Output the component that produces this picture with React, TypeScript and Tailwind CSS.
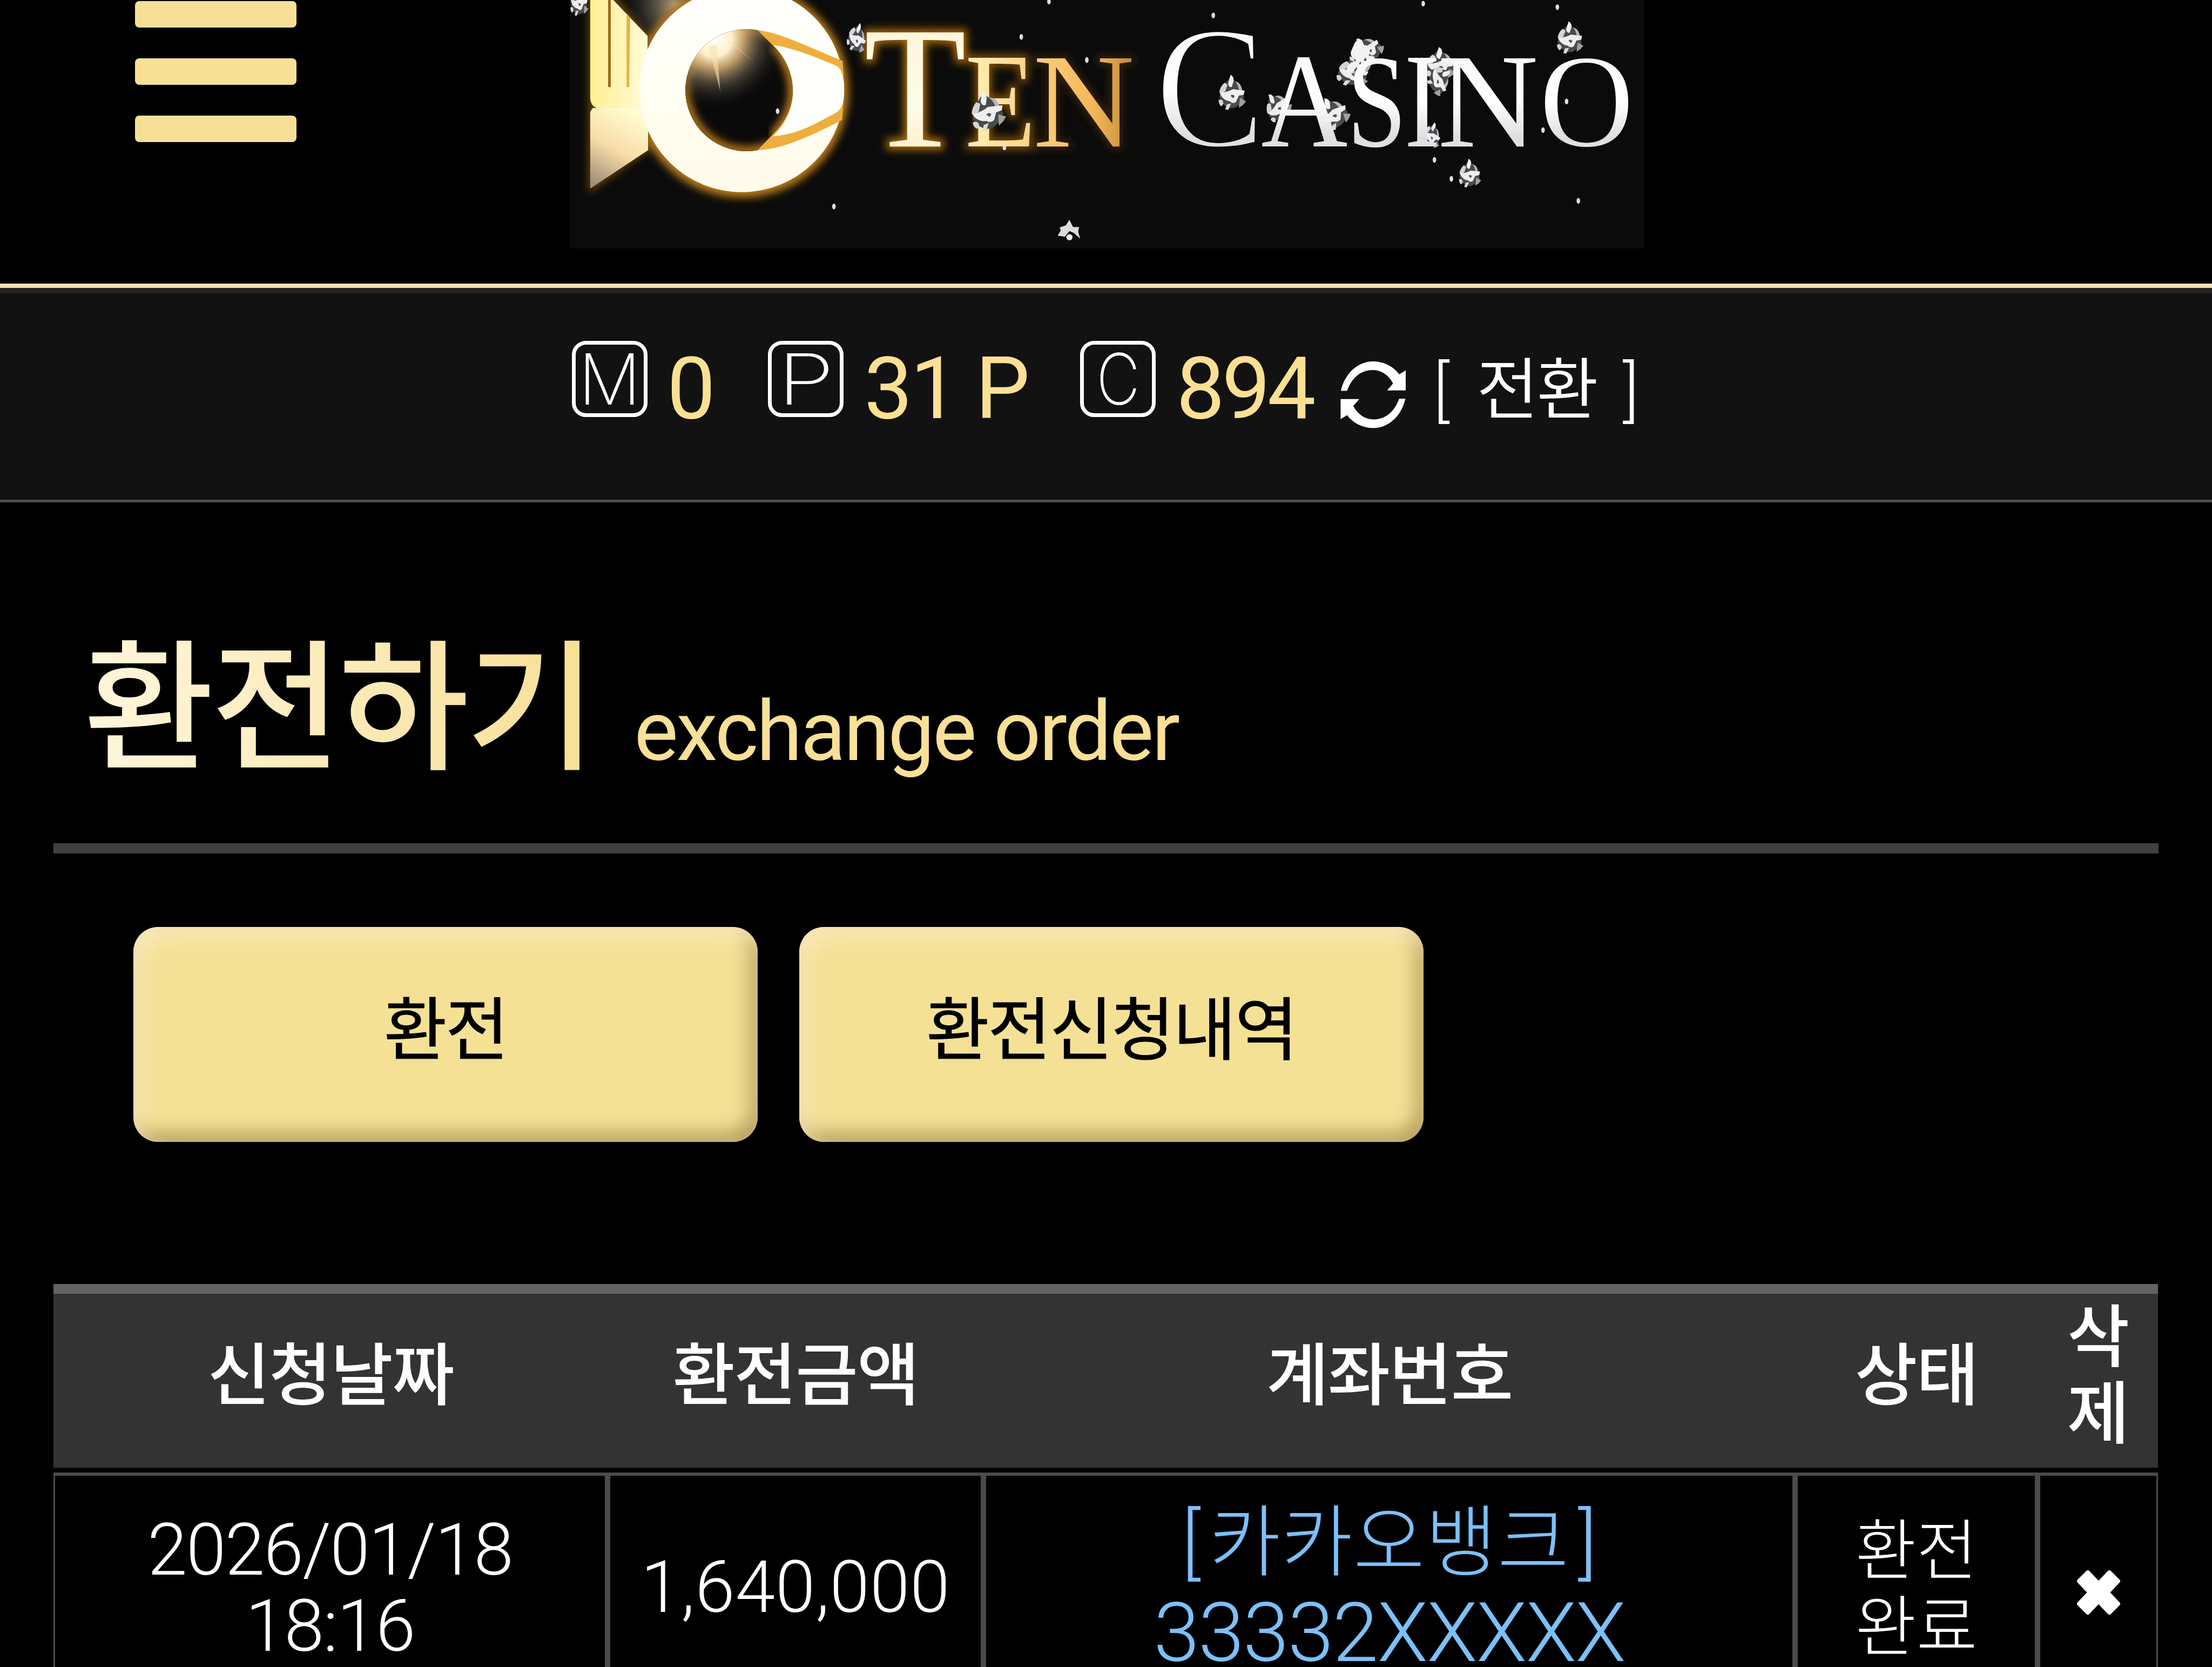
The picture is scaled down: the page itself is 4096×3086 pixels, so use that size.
import type { ReactNode } from 'react'
import { clsx } from 'clsx'

type LetterProps = {
  char: string
  x: number
  width: number
  size: number
  // left and right edge of the glyph, in em
  ink: [number, number]
  fill: string
  stroke?: string
  strokeWidth?: number
}

// One letter of the logo, stretched so that its ink fills the given width
function Letter({ char, x, width, size, ink, ...paint }: LetterProps) {
  const scale = width / ((ink[1] - ink[0]) * size)
  return (
    <text
      transform={`translate(${x - ink[0] * size * scale} 286) scale(${scale} 1)`}
      fontFamily="'Liberation Serif', serif"
      fontSize={size}
      {...paint}
    >
      {char}
    </text>
  )
}

type GemProps = { x: number; y: number; w: number; h: number; turn?: number }

function Gem({ x, y, w, h, turn = 0 }: GemProps) {
  return (
    <g transform={`translate(${x} ${y}) scale(${w / 100} ${h / 100}) rotate(${turn} 50 50)`}>
      <path d="M48 4 L62 18 L78 26 L86 44 L92 66 L80 82 L60 92 L38 94 L18 80 L8 62 L14 38 L30 22 Z" fill="#4a4b4d" />
      <path d="M46 0 Q58 4 56 18 L50 34 Q40 36 38 24 Z" fill="#f1f1f3" />
      <path d="M62 18 Q82 22 86 46 L74 42 Q72 28 62 18 Z" fill="#b4b6b9" />
      <path d="M26 22 L36 28 L28 46 Q14 56 8 48 Q12 32 26 22 Z" fill="#d4d5d7" />
      <path d="M10 50 Q40 48 54 40 L94 44 L90 56 L74 58 L64 76 Q52 82 44 74 L34 72 Q16 66 10 50 Z" fill="#eeeef0" />
      <path d="M46 58 Q54 52 60 60 L54 66 Z" fill="#55575a" />
      <path d="M78 64 L98 74 L88 84 L74 92 Z" fill="#9fa0a2" />
      <path d="M6 70 Q20 66 22 80 L16 88 Q6 84 6 70 Z" fill="#d6d6d8" />
      <path d="M34 82 L48 80 L38 98 L28 96 Z" fill="#dcdcde" />
    </g>
  )
}

const gems: GemProps[] = [
  { x: 1112, y: -26, w: 38, h: 58 },
  { x: 1654, y: 44, w: 40, h: 60, turn: 20 },
  { x: 1892, y: 178, w: 72, h: 78, turn: -12 },
  { x: 2377, y: 146, w: 58, h: 70 },
  { x: 2468, y: 178, w: 54, h: 60, turn: -35 },
  { x: 2570, y: 188, w: 66, h: 66, turn: -25 },
  { x: 2640, y: 68, w: 62, h: 56, turn: -40 },
  { x: 2609, y: 108, w: 68, h: 62, turn: 10 },
  { x: 2636, y: 86, w: 50, h: 66, turn: 80 },
  { x: 2782, y: 92, w: 62, h: 66 },
  { x: 2788, y: 124, w: 48, h: 62, turn: 60 },
  { x: 2778, y: 238, w: 38, h: 52, turn: 20 },
  { x: 2847, y: 310, w: 47, h: 57 },
  { x: 3038, y: 42, w: 56, h: 64 },
]

const sparks = [
  [2370, 30], [2780, 7], [3042, 14], [3060, 198], [3014, 254], [2802, 312], [2835, 349],
  [3083, 392], [1995, 72], [2123, 117], [1519, 217], [1629, 403], [1962, 288], [2049, 3],
]

const goldLetters: LetterProps[] = [
  { char: 'T', x: 1693, width: 189, size: 340, ink: [0.017, 0.593], fill: 'url(#goldT)' },
  { char: 'E', x: 1888, width: 132, size: 263, ink: [0.012, 0.597], fill: 'url(#goldE)' },
  { char: 'N', x: 2021, width: 191, size: 263, ink: [0.012, 0.707], fill: 'url(#goldN)' },
]

const silverLetters: LetterProps[] = [
  { char: 'C', x: 2265, width: 196, size: 342, ink: [0.028, 0.633], fill: 'url(#silver)', stroke: '#0b0b0b', strokeWidth: 6 },
  { char: 'A', x: 2467, width: 162, size: 263, ink: [0.015, 0.706], fill: 'url(#silver)' },
  { char: 'S', x: 2640, width: 94, size: 260, ink: [0.042, 0.491], fill: 'url(#silver)' },
  { char: 'I', x: 2747, width: 62, size: 263, ink: [0.018, 0.315], fill: 'url(#silver)' },
  { char: 'N', x: 2811, width: 190, size: 263, ink: [0.012, 0.707], fill: 'url(#silver)' },
  { char: 'O', x: 3015, width: 168, size: 260, ink: [0.034, 0.688], fill: 'url(#silver)', stroke: '#0b0b0b', strokeWidth: 2 },
]

function Logo() {
  return (
    <svg viewBox="1113 0 2098 485" preserveAspectRatio="none" className="block h-[460px] w-[1989px] bg-[#0b0b0b]">
      <defs>
        <linearGradient id="goldT" x1="0" y1="0" x2="0" y2="1">
          <stop offset="0" stopColor="#fff3d6" />
          <stop offset="0.6" stopColor="#fffbe6" />
          <stop offset="1" stopColor="#ffe9b8" />
        </linearGradient>
        <linearGradient id="goldE" x1="0" y1="0" x2="1" y2="0">
          <stop offset="0" stopColor="#fff2b8" />
          <stop offset="1" stopColor="#fcd084" />
        </linearGradient>
        <linearGradient id="goldN" x1="0" y1="0" x2="1" y2="0">
          <stop offset="0" stopColor="#fdd07c" />
          <stop offset="0.6" stopColor="#f3b75a" />
          <stop offset="1" stopColor="#bd8838" />
        </linearGradient>
        <linearGradient id="silver" x1="0" y1="0" x2="0" y2="1">
          <stop offset="0" stopColor="#f4f4f6" />
          <stop offset="0.5" stopColor="#ffffff" />
          <stop offset="0.75" stopColor="#dedee2" />
          <stop offset="1" stopColor="#f6f6f8" />
        </linearGradient>
        <linearGradient id="ring" x1="0" y1="0" x2="0" y2="1">
          <stop offset="0" stopColor="#ffffff" />
          <stop offset="0.6" stopColor="#fffef0" />
          <stop offset="1" stopColor="#fffaea" />
        </linearGradient>
        <linearGradient id="pillar" x1="0" y1="0" x2="1" y2="0">
          <stop offset="0" stopColor="#fff092" />
          <stop offset="1" stopColor="#fffbd8" />
        </linearGradient>
        <linearGradient id="base" x1="0.6" y1="0" x2="0.2" y2="1">
          <stop offset="0" stopColor="#fffdd0" />
          <stop offset="0.5" stopColor="#f8dca8" />
          <stop offset="1" stopColor="#a08c78" />
        </linearGradient>
        <radialGradient id="flare" gradientUnits="userSpaceOnUse" cx="1395" cy="75" r="140">
          <stop offset="0" stopColor="#ffffff" />
          <stop offset="0.25" stopColor="#fff0cc" />
          <stop offset="0.42" stopColor="#dcb478" stopOpacity="0.85" />
          <stop offset="0.65" stopColor="#6d6350" stopOpacity="0.55" />
          <stop offset="1" stopColor="#0b0b0b" stopOpacity="0" />
        </radialGradient>
        <radialGradient id="halo" gradientUnits="userSpaceOnUse" cx="1318" cy="10" r="110">
          <stop offset="0" stopColor="#c9ad80" stopOpacity="0.9" />
          <stop offset="0.5" stopColor="#55534a" stopOpacity="0.6" />
          <stop offset="1" stopColor="#0b0b0b" stopOpacity="0" />
        </radialGradient>
        <filter id="glow" x="-20%" y="-20%" width="140%" height="140%">
          <feGaussianBlur stdDeviation="8" />
        </filter>
        <clipPath id="eye">
          <circle cx="1458" cy="176" r="119" />
        </clipPath>
      </defs>

      <circle cx="1318" cy="10" r="110" fill="url(#halo)" />

      {/* glow behind the gold shapes */}
      <g filter="url(#glow)">
        <circle cx="1449" cy="177" r="160" fill="none" stroke="#b67a1e" strokeWidth="98" />
        <path d="M1150 -10 H1200 L1268 72 V293 L1150 376 Z" fill="#6b4510" />
        {goldLetters.map((l) => (
          <Letter
            key={l.char}
            {...l}
            fill={l.char === 'N' ? '#50340c' : '#b87714'}
            stroke={l.char === 'N' ? '#2c1d08' : l.char === 'T' ? '#a06610' : '#6e460e'}
            strokeWidth={14}
          />
        ))}
      </g>

      <path d="M1153 0 H1198 L1265 70 V211 H1166 Q1153 206 1153 190 Z" fill="url(#pillar)" />
      <path d="M1188 0 H1193 V170 H1188 Z" fill="#9a6416" />
      <path d="M1224 26 L1231 34 L1229 170 H1224 Z" fill="#eab13a" />
      <path d="M1158 211 H1266 V293 L1153 368 V218 Z" fill="url(#base)" />

      <path
        d="M1449 -25 A200 200 0 1 1 1449 375 A200 200 0 1 1 1449 -25 Z M1458 57 A119 119 0 1 0 1458 295 A119 119 0 1 0 1458 57 Z"
        fill="url(#ring)"
        fillRule="evenodd"
      />
      <circle cx="1458" cy="176" r="119" fill="#0a0a0a" />
      <g clipPath="url(#eye)">
        <circle cx="1458" cy="176" r="119" fill="none" stroke="#b97a1e" strokeWidth="18" filter="url(#glow)" />
        <path d="M1511 88 C1562 140 1562 216 1510 266" fill="none" stroke="#c08322" strokeWidth="18" filter="url(#glow)" />
        <circle cx="1395" cy="75" r="140" fill="url(#flare)" />
        <path d="M1384 90 L1407 178 L1400 88 Z" fill="#f8dfae" opacity="0.6" />
        <path d="M1416 76 L1472 120 L1428 82 Z" fill="#f8dfae" opacity="0.5" />
      </g>
      <path
        d="M1480 59 C1520 62 1580 92 1646 119 Q1651 175 1645 234 C1590 262 1530 292 1480 293 L1510 262 C1562 212 1562 140 1511 90 Z"
        fill="#eeae3e"
      />
      <path
        d="M1511 88 C1545 92 1590 110 1633 128 C1644 133 1649 150 1649 175 C1649 200 1644 214 1633 220 C1595 240 1560 262 1510 266 C1562 216 1562 140 1511 88 Z"
        fill="#fffffb"
      />

      {goldLetters.map((l) => (
        <Letter key={l.char} {...l} />
      ))}
      {silverLetters.slice(0, 1).map((l) => (
        <Letter key={l.char} {...l} />
      ))}
      {gems.map((g) => (
        <Gem key={`${g.x}-${g.y}`} {...g} />
      ))}
      {silverLetters.slice(1).map((l) => (
        <Letter key={l.char} {...l} />
      ))}
      <path d="M2646 84 Q2656 70 2664 88 Q2680 88 2674 108 L2656 122 Q2640 148 2632 138 Q2626 126 2650 118 Q2634 110 2640 98 Z" fill="#f2f3f5" />

      <path d="M2089 429 L2096 443 L2108 443 L2106 452 L2110 466 L2098 455 L2089 451 L2080 462 L2066 460 L2072 450 L2070 444 L2082 440 Z" fill="#dcdcde" />
      <circle cx="2089" cy="463" r="6" fill="#f0f0f0" />
      {sparks.map(([x, y]) => (
        <ellipse key={`${x}-${y}`} cx={x} cy={y} rx="3.5" ry="5.5" fill="#dedede" />
      ))}
    </svg>
  )
}

function RefreshIcon() {
  const arc = 'M1 54.4 C8 22 33 0 60 0 C80 0 98 9 109 24 L121 16.5 V53.7 H86.5 L97.5 41 C90 26 76 16 60 16 C37 16 21 31 12.5 54.4 Z'
  return (
    <svg viewBox="0 0 122 124" className="h-[124px] w-[122px] fill-white">
      <path d={arc} />
      <path d={arc} transform="rotate(180 60.7 61.7)" />
    </svg>
  )
}

function DeleteIcon() {
  return (
    <svg viewBox="0 0 80 82" className="h-[82px] w-[80px] fill-white stroke-white stroke-[8]" strokeLinejoin="round">
      <path d="M20 4 L40 25 L60 4 L76 20 L56 41 L76 62 L60 78 L40 57 L20 78 L4 62 L24 41 L4 20 Z" />
    </svg>
  )
}

type BalanceProps = { mark: string; value: string; className?: string; markClass?: string }

function Balance({ mark, value, className, markClass }: BalanceProps) {
  return (
    <div className={clsx('flex', className)}>
      <span className="mt-[88px] flex h-[141px] w-[140px] items-center justify-center rounded-[26px] border-[7px] border-white font-['Inter'] text-[131px] leading-none font-[250] tracking-normal text-white">
        <span className={markClass}>{mark}</span>
      </span>
      <span className="mt-[97px] text-[160px] leading-[160px] whitespace-nowrap text-[#fbe094]">{value}</span>
    </div>
  )
}

function TabButton({ children }: { children: ReactNode }) {
  return (
    <button className="flex h-[398px] w-[1156px] items-center justify-center rounded-[46px] bg-[#f4e196] pb-[14px] text-[127px] leading-none font-normal tracking-[-2.5px] text-black shadow-[inset_12px_14px_36px_rgba(255,240,205,0.8),inset_-10px_-14px_36px_rgba(120,95,30,0.6)] [-webkit-text-stroke:1px_black]">
      {children}
    </button>
  )
}

const columns = ['신청날짜', '환전금액', '계좌번호', '상태', '삭제']

export default function App() {
  return (
    <div className="h-[3086px] w-[4096px] overflow-hidden bg-black font-['Roboto','Noto_Sans_CJK_KR',sans-serif] text-white">
      <header className="flex h-[533px] border-b-[8px] border-[#f3e0b4]">
        <div className="flex w-[1055px] flex-col gap-[57px] pt-[2px] pl-[250px]">
          <span className="h-[49px] w-[299px] rounded-[8px] bg-[#f7e096]" />
          <span className="h-[49px] w-[299px] rounded-[8px] bg-[#f7e096]" />
          <span className="h-[49px] w-[299px] rounded-[8px] bg-[#f7e096]" />
        </div>
        <Logo />
      </header>

      <section className="flex h-[397px] border-t-[10px] border-b-[5px] border-t-[#222221] border-b-[#4c4c4c] bg-[#121212] pl-[1059px]">
        <Balance mark="M" value="0" className="w-[363px] gap-[36px]" markClass="scale-x-[0.98]" />
        <Balance mark="P" value="31 P" className="w-[578px] gap-[38px] tracking-[-4.5px]" markClass="scale-x-[1.3]" />
        <Balance mark="C" value="894" className="w-[482px] gap-[38px] tracking-[-5.5px]" markClass="scale-x-[0.85]" />
        <span className="mt-[126px]">
          <RefreshIcon />
        </span>
        <span className="mt-[117px] ml-[50px] flex text-[125px] leading-[127px] font-[350]">
          <span>[</span>
          <span className="mr-[49px] ml-[50px] tracking-[-4px]">전환</span>
          <span>]</span>
        </span>
      </section>

      <main className="px-[99px]">
        <h1 className="flex h-[650px] items-baseline border-b-[19px] border-[#3f4040] pt-[225px] pl-[56px] leading-[320px]">
          <span className="bg-gradient-to-r from-[#fff6dc] to-[#f8df94] bg-clip-text text-[262px] font-[450] tracking-[-5px] text-transparent">환전하기</span>
          <small className="relative top-[3px] ml-[75px] text-[154px] tracking-[-3.5px] text-[#f9e096]">exchange order</small>
        </h1>

        <div className="flex gap-[77px] pt-[136px] pl-[148px]">
          <TabButton>환전</TabButton>
          <TabButton>환전신청내역</TabButton>
        </div>

        <div className="mt-[263px] w-[3897px]">
          <div className="grid h-[340px] grid-cols-[1026px_696px_1503px_449px_223px] border-t-[18px] border-[#626363] bg-[#333] text-center text-[126px] leading-[142px] font-medium tracking-[-2px]">
            {columns.map((name) => (
              <div key={name} className="flex items-center justify-center px-[50px] pb-[16px] break-all">
                {name}
              </div>
            ))}
          </div>
          <div className="mt-[9px] grid h-[420px] grid-cols-[1028px_696px_1503px_449px_215px] border-x-[3px] border-t-[6px] border-[#4d4b4a] text-center text-[133px] leading-[141px] font-light">
            <div className="border-r-[10px] border-[#4a4a4a] px-[120px] pt-[67px] tracking-[-2px]">
              2026/01/18 18:16
            </div>
            <div className="border-r-[10px] border-[#4a4a4a] pt-[136px] tracking-[0.6px]">1,640,000</div>
            <div className="border-r-[10px] border-[#4a4a4a] pt-[42px] text-[153px] leading-[166px] text-[#7cc0fa]">
              <p className="text-[144px]">
                [<span className="mx-[16px] tracking-[1px]">카카오뱅크</span>]
              </p>
              <p className="tracking-[-2px]">33332XXXXX</p>
            </div>
            <div className="border-r-[10px] border-[#4a4a4a] pt-[70px] text-[123px]">
              환전
              <br />
              완료
            </div>
            <div className="flex justify-center pt-[175px]">
              <DeleteIcon />
            </div>
          </div>
        </div>
      </main>
    </div>
  )
}
